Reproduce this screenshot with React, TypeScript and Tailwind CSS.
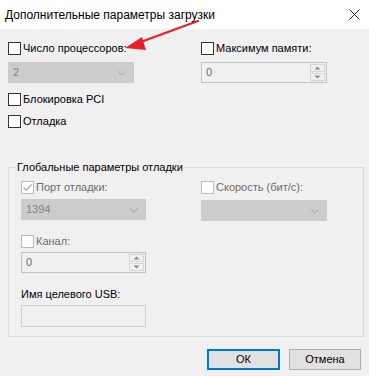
import React from "react";

const font = { fontFamily: '"Liberation Sans", Arial, sans-serif' };

function Check({ checked = false, disabled = false }: { checked?: boolean; disabled?: boolean }) {
  return (
    <div
      className={
        "w-[13px] h-[13px] border bg-white flex items-center justify-center shrink-0 " +
        (disabled ? "border-[#bcbcbc]" : "border-[#333333]")
      }
    >
      {checked && (
        <svg width="11" height="11" viewBox="0 0 11 11">
          <path d="M1.5 5.5 L4.2 8.2 L9.5 2.5" fill="none" stroke="#a8a8a8" strokeWidth="1.2" />
        </svg>
      )}
    </div>
  );
}

function CheckRow({ label, checked, disabled }: { label: string; checked?: boolean; disabled?: boolean }) {
  return (
    <div className="flex items-center h-[13px] gap-[2px]">
      <Check checked={checked} disabled={disabled} />
      <span className={"text-[11px] leading-[13px] " + (disabled ? "text-[#6d6d6d]" : "text-black")}>{label}</span>
    </div>
  );
}

function Combo({ value, width }: { value?: string; width: string }) {
  return (
    <div className={"h-[21px] bg-[#cccccc] border border-[#cccccc] flex items-center justify-between pl-[4px] pr-[6px] " + width}>
      <span className="text-[11px] text-[#838383]">{value ?? ""}</span>
      <svg width="10" height="6" viewBox="0 0 10 6">
        <path d="M1 1 L5 5 L9 1" fill="none" stroke="#a9a9a9" strokeWidth="1" />
      </svg>
    </div>
  );
}

function Spin({ value, width }: { value: string; width: string }) {
  return (
    <div className={"h-[21px] bg-[#f0f0f0] border border-[#c2c2c2] flex items-stretch " + width}>
      <div className="flex-1 flex items-center pl-[4px] text-[11px] text-[#6d6d6d]">{value}</div>
      <div className="w-[17px] flex flex-col gap-[1px] p-[1px]">
        <div className="flex-1 border border-[#d4d4d4] bg-[#f0f0f0] flex items-center justify-center">
          <svg width="7" height="4" viewBox="0 0 7 4">
            <path d="M0.5 3.5 L3.5 0.5 L6.5 3.5 Z" fill="#8a8a8a" />
          </svg>
        </div>
        <div className="flex-1 border border-[#d4d4d4] bg-[#f0f0f0] flex items-center justify-center">
          <svg width="7" height="4" viewBox="0 0 7 4">
            <path d="M0.5 0.5 L3.5 3.5 L6.5 0.5 Z" fill="#8a8a8a" />
          </svg>
        </div>
      </div>
    </div>
  );
}

export default function App() {
  return (
    <div className="w-[369px] h-[376px] bg-[#f0f0f0] relative overflow-hidden" style={font}>
      {/* Title bar */}
      <div className="h-[29px] bg-white flex items-center justify-between pl-[5px] pr-[9px]">
        <span className="text-[12px] text-black">Дополнительные параметры загрузки</span>
        <svg width="11" height="11" viewBox="0 0 11 11">
          <path d="M0.5 0.5 L10.5 10.5 M10.5 0.5 L0.5 10.5" stroke="#222" strokeWidth="1" />
        </svg>
      </div>

      {/* Top section */}
      <div className="flex pl-[8px] pt-[13px]">
        <div className="w-[193px] flex flex-col">
          <CheckRow label="Число процессоров:" />
          <div className="mt-[7px]">
            <Combo value="2" width="w-[126px]" />
          </div>
          <div className="mt-[10px]">
            <CheckRow label="Блокировка PCI" />
          </div>
          <div className="mt-[9px]">
            <CheckRow label="Отладка" />
          </div>
        </div>
        <div className="flex flex-col">
          <CheckRow label="Максимум памяти:" />
          <div className="mt-[7px]">
            <Spin value="0" width="w-[126px]" />
          </div>
        </div>
      </div>

      {/* Group box */}
      <fieldset className="mx-[8px] mt-[31px] w-[356px] h-[178px] border border-[#dcdcdc] px-[7px]">
        <legend className="px-[1px] text-[11px] leading-[16px] text-black">Глобальные параметры отладки</legend>
        <div className="pl-[5px] pt-[6px] flex">
          <div className="w-[180px] flex flex-col">
            <CheckRow label="Порт отладки:" checked disabled />
            <div className="mt-[5px]">
              <Combo value="1394" width="w-[125px]" />
            </div>
            <div className="mt-[15px]">
              <CheckRow label="Канал:" disabled />
            </div>
            <div className="mt-[4px]">
              <Spin value="0" width="w-[125px]" />
            </div>
            <div className="mt-[14px] text-[11px] leading-[14px] text-black">Имя целевого USB:</div>
            <div className="mt-[4px] w-[125px] h-[22px] bg-[#f0f0f0] border border-[#cfcfcf]" />
          </div>
          <div className="flex flex-col">
            <CheckRow label="Скорость (бит/с):" disabled />
            <div className="mt-[6px]">
              <Combo width="w-[126px]" />
            </div>
          </div>
        </div>
      </fieldset>

      {/* Buttons */}
      <div className="flex justify-end gap-[9px] pr-[8px] mt-[12px]">
        <button className="w-[73px] h-[21px] bg-[#e1e1e1] border-2 border-[#0078d7] text-[11px] text-black flex items-center justify-center">
          ОК
        </button>
        <button className="w-[72px] h-[21px] bg-[#e1e1e1] border border-[#adadad] text-[11px] text-black flex items-center justify-center">
          Отмена
        </button>
      </div>

      {/* Red arrow annotation */}
      <svg className="absolute left-0 top-0 pointer-events-none" width="369" height="376" viewBox="0 0 369 376">
        <line x1="198" y1="21" x2="138" y2="43" stroke="#e8202a" strokeWidth="2.2" strokeLinecap="round" />
        <path d="M125 48 L142 37 L146 50 Z" fill="#e8202a" />
      </svg>
    </div>
  );
}
